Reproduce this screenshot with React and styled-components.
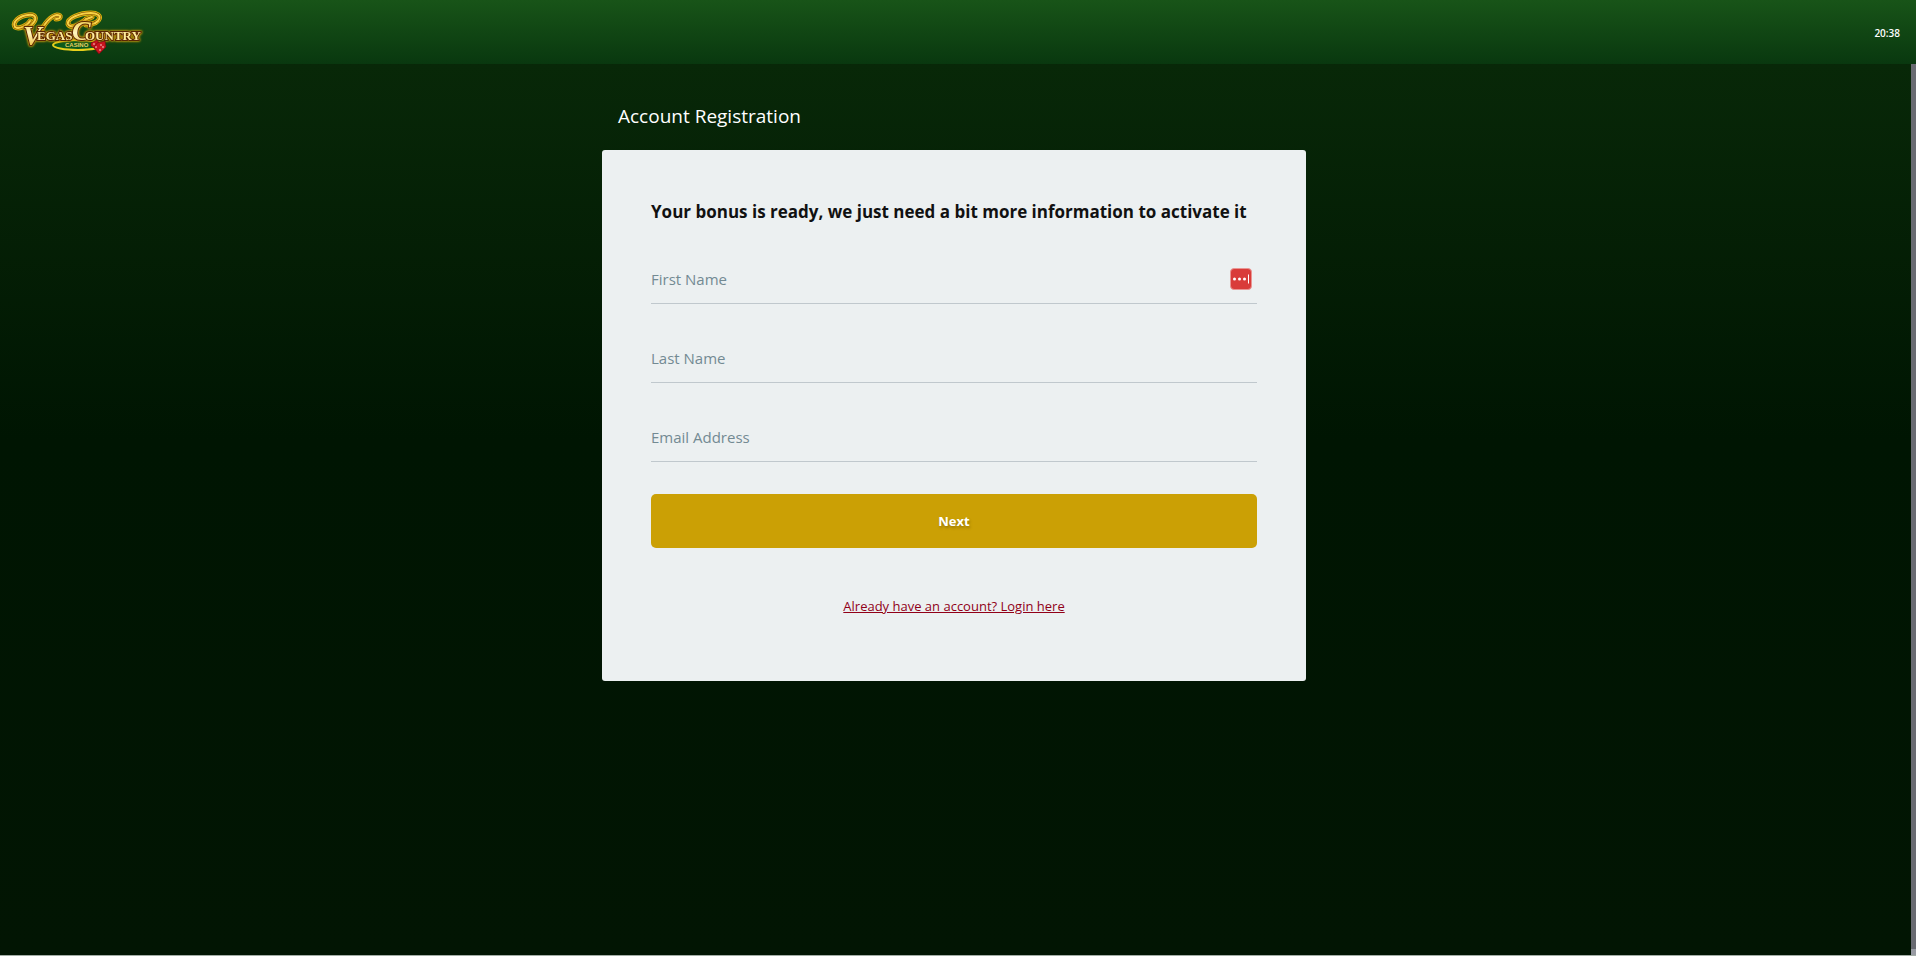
import React from "react"
import styled, { createGlobalStyle } from "styled-components"

const fields = [
    { id: "firstName", label: "First Name", type: "text", manager: true },
    { id: "lastName", label: "Last Name", type: "text" },
    { id: "email", label: "Email Address", type: "email" },
]

const Logo = () => (
    <LogoImage viewBox="-2 -3 136 48" role="img" aria-label="Vegas Country Casino">
        <defs>
            <linearGradient id="gold" x1="0" y1="0" x2="0" y2="1">
                <stop offset="0" stopColor="#f0c428" />
                <stop offset=".5" stopColor="#fff6c0" />
                <stop offset="1" stopColor="#e8b018" />
            </linearGradient>
        </defs>

        <ellipse cx="66" cy="33" rx="25" ry="5" fill="#0c5a1c" stroke="#e8d01c" strokeWidth="2" />

        {/* swashes, a gold rim first, then the dark line and the bright core */}
        {[["#d8b40c", 5], ["#7a4206", 3], ["#f8d444", 2]].map(([color, width]) => (
            <g key={color} fill="none" stroke={color} strokeWidth={width} strokeLinecap="round">
                <path d="M17 15 C27 7 24 2 16 3 C7 4 0 10 3 15 C7 18 16 13 18 9" />
                <path d="M26 24 C31 14 37 4 45 3 C50 3 49 7 44 7" />
                <path d="M74 13 C90 12 92 1 79 1 C68 1 55 6 56 12 C58 17 71 13 74 7" />
                <path d="M80 5 C70 8 63 16 64 22" />
            </g>
        ))}

        <Wordmark y="28">
            <Initial x="11" y="33">V</Initial>
            <tspan x="25" y="28">EGAS</tspan>
            <Initial x="60" y="28">C</Initial>
            <tspan x="73" y="28">OUNTRY</tspan>
        </Wordmark>
        <CasinoText x="53" y="35">CASINO</CasinoText>

        <g fill="#c8141e" stroke="#700810" strokeWidth=".6">
            <path d="M79 31 l6 -3 4 5 -5 4 -5 -3z" />
            <path d="M85 31 l8 -2 1 6 -7 7 -5 -6z" />
        </g>
        <g fill="#ffd9d9">
            <circle cx="82" cy="32" r=".8" />
            <circle cx="84" cy="35" r=".8" />
            <circle cx="89" cy="33" r=".8" />
            <circle cx="91" cy="35" r=".8" />
            <circle cx="88" cy="38" r=".8" />
        </g>
    </LogoImage>
)

const Field = ({ id, label, type, manager }) => (
    <FieldWrap>
        <Input id={id} name={id} type={type} placeholder=" " />
        <Label htmlFor={id}>{label}</Label>
        {manager && (
            <ManagerButton type="button" aria-label="Fill in from password manager">
                <svg width="22" height="22" viewBox="0 0 22 22">
                    <rect x=".5" y=".5" width="21" height="21" rx="3.5" fill="#d93c3a" stroke="#e99593" />
                    <circle cx="4.5" cy="11" r="1.5" fill="#fff" />
                    <circle cx="9.5" cy="11" r="1.5" fill="#fff" />
                    <circle cx="14.5" cy="11" r="1.5" fill="#fff" />
                    <rect x="18" y="6.5" width="1" height="9" fill="#fff" />
                </svg>
            </ManagerButton>
        )}
    </FieldWrap>
)

const App = () => {
    return (
        <Page>
            <GlobalStyle />
            <Header>
                <Logo />
                <Clock>20:38</Clock>
            </Header>
            <Main>
                <Content>
                    <Title>Account Registration</Title>
                    <Card onSubmit={e => e.preventDefault()}>
                        <Subtitle>Your bonus is ready, we just need a bit more information to activate it</Subtitle>
                        <Fields>
                            {fields.map(field => <Field key={field.id} {...field} />)}
                        </Fields>
                        <NextButton type="submit">Next</NextButton>
                        <LoginLink href="#login">Already have an account? Login here</LoginLink>
                    </Card>
                </Content>
                <ScrollTrack>
                    <ScrollThumb />
                </ScrollTrack>
            </Main>
        </Page>
    )
}

export default App

const GlobalStyle = createGlobalStyle`
    * {
        box-sizing: border-box;
    }

    body {
        margin: 0;
        font-family: "Segoe UI", "Open Sans", "Noto Sans", sans-serif;
    }

    input, button {
        font-family: inherit;
    }
`

const Page = styled.div`
    min-height: 100vh;
    display: flex;
    flex-direction: column;
    background: #021503;
    border-bottom: 1px solid #a3ada6;
`

const Header = styled.header`
    height: 64px;
    padding: 2px 16px 0 10px;
    display: flex;
    align-items: center;
    justify-content: space-between;
    background: linear-gradient(#185418, #09380f);
`

const LogoImage = styled.svg`
    width: 136px;
    height: 48px;
`

const Wordmark = styled.text`
    font-family: "Liberation Serif", serif;
    font-size: 13px;
    font-weight: bold;
    fill: #ffec9c;
    stroke: #5a2604;
    stroke-width: 2px;
    paint-order: stroke;
    filter: drop-shadow(0 0 1px #e0b010) drop-shadow(0 0 1px #a87808);
`

const Initial = styled.tspan`
    font-size: 28px;
    font-style: italic;
    fill: url(#gold);
`

const CasinoText = styled.text`
    font-family: "Liberation Sans", sans-serif;
    font-size: 6px;
    font-weight: bold;
    fill: #e8d060;
`

const Clock = styled.time`
    font-size: 10px;
    font-weight: 600;
    line-height: 16px;
    color: #fff;
`

const Main = styled.main`
    position: relative;
    flex: 1;
    padding: 38px 8px 40px 0;
    background: linear-gradient(#082808, #001502 376px, #021503);
`

const Content = styled.div`
    max-width: 704px;
    margin: 0 auto;
`

const Title = styled.h1`
    margin: 0 0 20px;
    padding: 0 16px;
    font-size: 19px;
    font-weight: 400;
    line-height: 28px;
    color: #fff;
`

const Card = styled.form`
    display: flex;
    flex-direction: column;
    padding: 49px 49px 65px;
    border-radius: 3px;
    background: #ecf0f1;
`

const Subtitle = styled.h2`
    margin: 0 0 24px;
    font-size: 17px;
    font-weight: 700;
    line-height: 26px;
    color: #111;
`

const Fields = styled.div`
    display: flex;
    flex-direction: column;
    gap: 24px;
    margin-bottom: 32px;
`

const FieldWrap = styled.div`
    position: relative;
`

const Label = styled.label`
    position: absolute;
    left: 0;
    top: 20px;
    font-size: 15px;
    line-height: 20px;
    color: #738a93;
    pointer-events: none;
`

const Input = styled.input`
    display: block;
    width: 100%;
    height: 55px;
    padding: 12px 32px 6px 0;
    border: 0;
    border-bottom: 1px solid #c0c8cd;
    border-radius: 0;
    outline: none;
    background: transparent;
    font-size: 15px;
    color: #111;

    &:focus + ${Label}, &:not(:placeholder-shown) + ${Label} {
        top: 0;
        font-size: 13px;
    }
`

const ManagerButton = styled.button`
    position: absolute;
    right: 5px;
    top: 19px;
    display: flex;
    padding: 0;
    border: 0;
    background: none;
    cursor: pointer;
`

const NextButton = styled.button`
    height: 54px;
    margin-bottom: 48px;
    border: 0;
    border-radius: 5px;
    background: #cba005;
    font-size: 13px;
    font-weight: 700;
    color: #fff;
    text-shadow: 1px 2px 3px rgba(0, 0, 0, .25);
    cursor: pointer;
`

const LoginLink = styled.a`
    align-self: center;
    font-size: 13px;
    line-height: 20px;
    color: #910018;
`

const ScrollTrack = styled.div`
    position: absolute;
    top: 0;
    right: 0;
    bottom: 0;
    width: 5px;
    background: #989ba3;
`

const ScrollThumb = styled.div`
    height: calc(100% - 6px);
    background: #696b72;
`
